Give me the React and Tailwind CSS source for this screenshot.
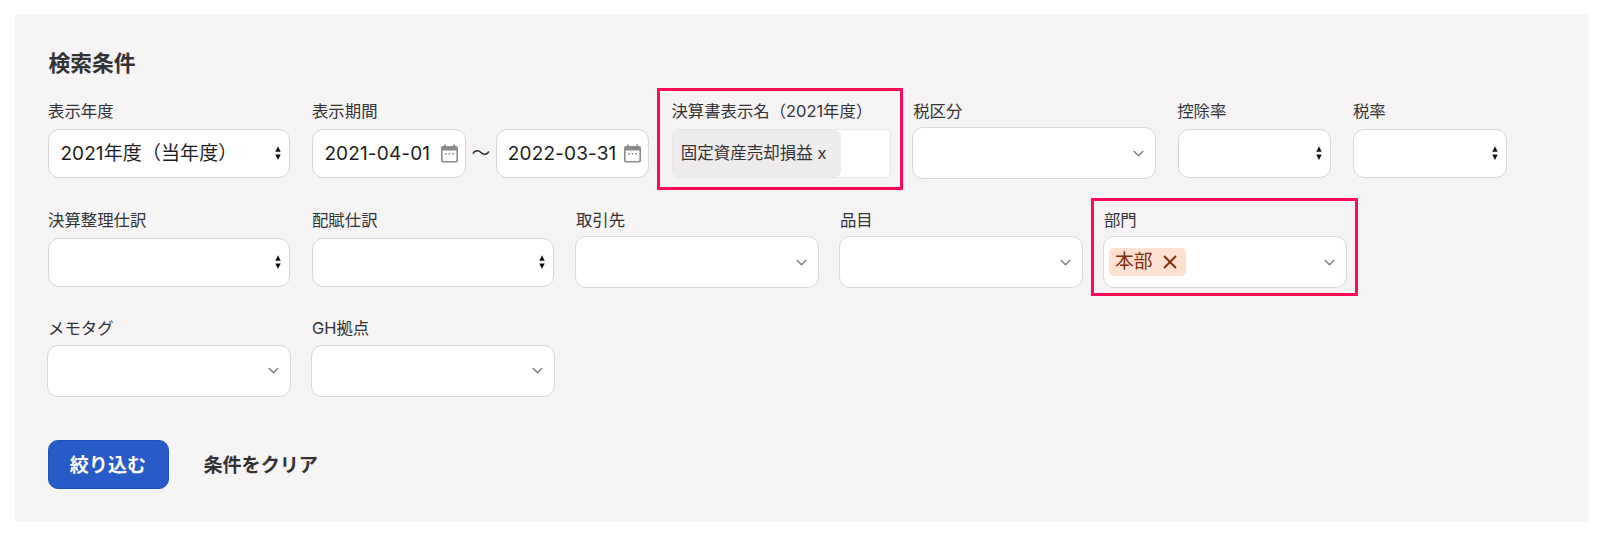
const Label = ({ children }) => (
  <span className="block h-6 mb-1.5 -ml-[0.4px] text-[16.4px] leading-6 whitespace-nowrap text-[#323232]">
    {children}
  </span>
);

const Field = ({ label, className = "w-[241.4px]", children }) => (
  <div className={`h-[79px] shrink-0 ${className}`}>
    <Label>{label}</Label>
    {children}
  </div>
);

const Select = ({ value }) => (
  <div className="h-[49px] flex items-center justify-between rounded-[11px] border border-[#d9d7d8] bg-white pl-[11px] pr-[7px] text-[19px] text-[#1c1c1c]">
    <span className="pt-0.5 whitespace-nowrap tracking-[0.1px]">{value}</span>
    <svg className="w-2 h-4 -mt-px" viewBox="0 0 8 16">
      <path d="M4 1.2 6.7 6.8H1.3zM4 15 1.3 9.6h5.4z" fill="#111" />
    </svg>
  </div>
);

// the combo box is a bit larger than the plain select on every side
const Combo = ({ children }) => (
  <div className="h-[52px] -mx-[1.4px] -mt-[1.6px] flex items-center rounded-[11px] border border-[#d9d7d8] bg-white pl-[5px] pr-[11px]">
    {children}
    <svg className="ml-auto w-[11px] h-[7px]" viewBox="0 0 11 7" fill="none">
      <path d="M.8 1 5.5 5.7 10.2 1" stroke="#828282" strokeWidth="1.6" />
    </svg>
  </div>
);

const CalendarIcon = () => (
  <svg className="w-[17px] h-[19px]" viewBox="0 0 17 19">
    <path
      d="M2 2h1V.4h1.7V2h7.6V.4H14V2h1a2 2 0 0 1 2 2v12.5a2 2 0 0 1-2 2H2a2 2 0 0 1-2-2V4a2 2 0 0 1 2-2z"
      fill="#8c8a8a"
    />
    <path d="M1.6 6.6h13.8v9.3a1 1 0 0 1-1 1H2.6a1 1 0 0 1-1-1z" fill="#fff" />
    <path d="M4 8.9h1.7v1.6H4zM7.7 8.9h1.6v1.6H7.7zM11.3 8.9H13v1.6h-1.7z" fill="#8c8a8a" />
  </svg>
);

const DateInput = ({ value }) => (
  <div className="w-[153.4px] h-[49px] flex items-center justify-between rounded-[11px] border border-[#d9d7d8] bg-white pl-[11px] pr-[7px] text-[19px] text-[#1c1c1c]">
    <span className="pt-0.5 whitespace-nowrap tracking-[0.15px]">{value}</span>
    <CalendarIcon />
  </div>
);

const Highlight = ({ className }) => (
  <div className={`absolute border-3 border-[#ff0a57] pointer-events-none ${className}`} />
);

export default function App() {
  return (
    <div className="h-[539px] bg-white pt-3.5 pl-[15px] font-['Inter','Noto_Sans_CJK_JP',sans-serif]">
      <section className="w-[1574px] h-[508px] bg-[#f6f4f5] pt-[33px] pl-[33.4px]">
        <h2 className="h-8 text-[21.8px] leading-8 font-bold text-[#323232]">検索条件</h2>

        <div className="mt-5 flex flex-col gap-[29.6px]">
          <div className="flex gap-[22.6px]">
            <Field label="表示年度">
              <Select value="2021年度（当年度）" />
            </Field>
            <Field label="表示期間" className="w-[336.8px]">
              <div className="flex items-center justify-between">
                <DateInput value="2021-04-01" />
                <span className="pt-px text-[18.8px] text-[#323232]">〜</span>
                <DateInput value="2022-03-31" />
              </div>
            </Field>
            <Field label="決算書表示名（2021年度）" className="relative w-[219.2px]">
              <div className="h-[49px] flex rounded-md border border-[#e9e7e8] bg-white overflow-hidden">
                <div className="w-[168px] h-full flex items-center rounded-md bg-[#eeecec] pl-2 text-[16.5px] whitespace-pre text-[#323232]">
                  固定資産売却損益 x
                </div>
              </div>
              <Highlight className="-left-[15px] -top-[11px] w-[246px] h-[102px]" />
            </Field>
            <Field label="税区分">
              <Combo />
            </Field>
            <Field label="控除率" className="w-[153.2px]">
              <Select />
            </Field>
            <Field label="税率" className="w-[153.2px]">
              <Select />
            </Field>
          </div>

          <div className="flex gap-[22.6px]">
            <Field label="決算整理仕訳">
              <Select />
            </Field>
            <Field label="配賦仕訳">
              <Select />
            </Field>
            <Field label="取引先">
              <Combo />
            </Field>
            <Field label="品目">
              <Combo />
            </Field>
            <Field label="部門" className="relative w-[241.4px]">
              <Combo>
                <span className="w-[77px] h-7 flex items-center justify-between rounded-[5px] bg-[#ffe1d2] pl-1.5 pr-[9px] text-[18.8px] leading-7 text-[#7d2d0a]">
                  本部
                  <svg className="w-[14px] h-[14px]" viewBox="0 0 14 14">
                    <path d="M1 1l12 12M13 1 1 13" stroke="#7d2d0a" strokeWidth="1.9" />
                  </svg>
                </span>
              </Combo>
              <Highlight className="-left-[13.5px] -top-[9.6px] w-[267px] h-[98px]" />
            </Field>
          </div>

          <div className="flex gap-[22.6px]">
            <Field label="メモタグ">
              <Combo />
            </Field>
            <Field label="GH拠点">
              <Combo />
            </Field>
          </div>
        </div>

        <div className="mt-[45px] flex items-center gap-[34px] text-[19.1px] font-bold">
          <button className="w-[121px] h-[49px] rounded-[10px] border border-[#1e50be] bg-[#285ac8] pt-0.5 pr-0.5 text-white">
            絞り込む
          </button>
          <button className="pt-0.5 text-[#323232]">条件をクリア</button>
        </div>
      </section>
    </div>
  );
}
